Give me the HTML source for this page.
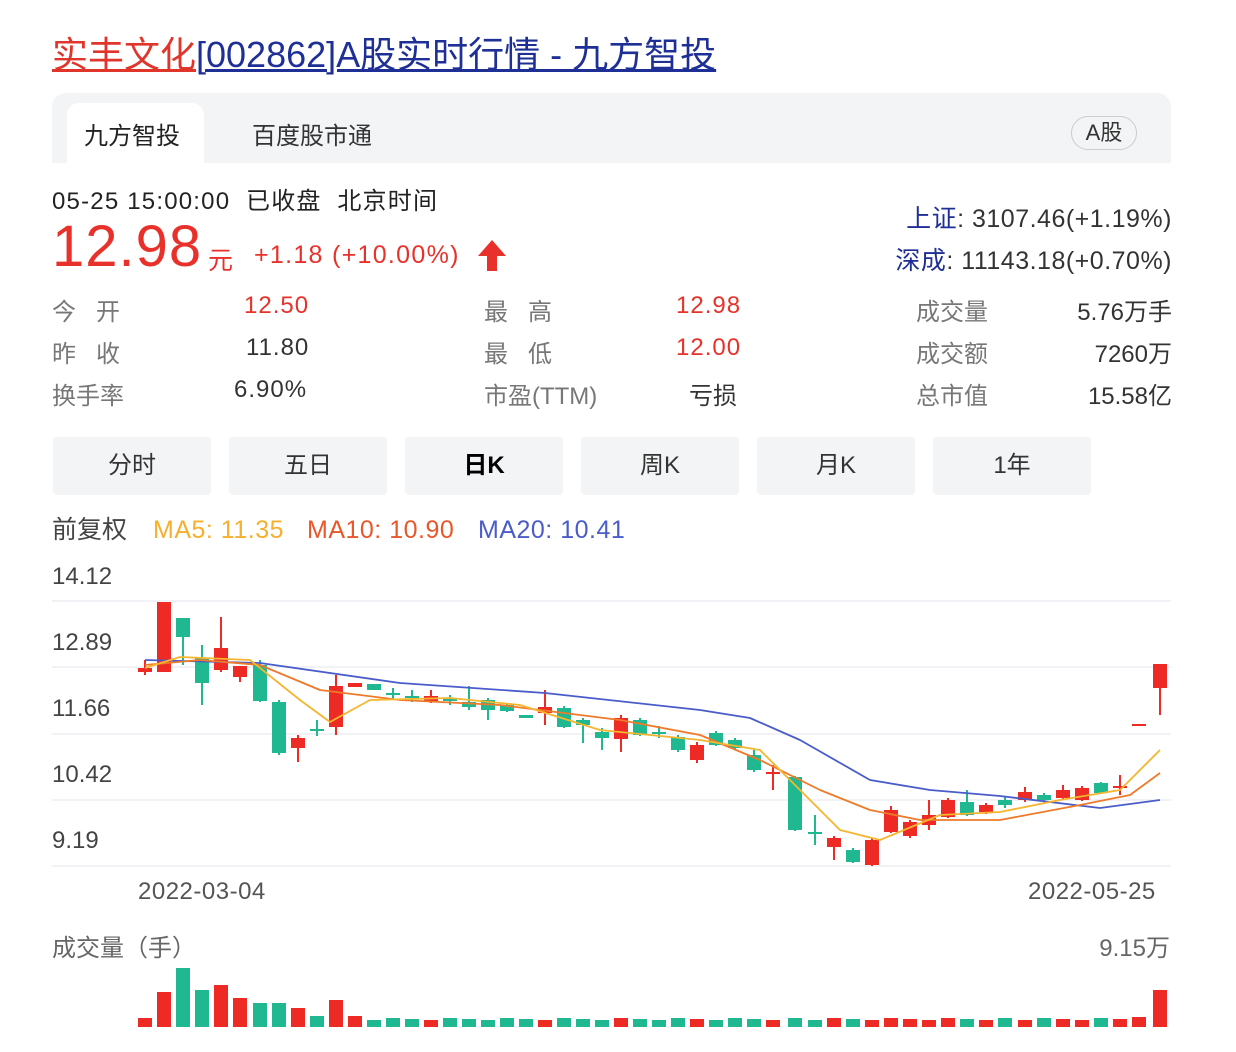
<!DOCTYPE html>
<html><head><meta charset="utf-8"><style>
body{margin:0;width:1236px;height:1052px;background:#fff;position:relative;overflow:hidden;font-family:"Liberation Sans","Noto Sans CJK SC",sans-serif;color:#333}
.a{position:absolute;white-space:nowrap}
.g{color:#777}
.btn{position:absolute;top:437px;width:158px;height:58px;background:#f3f4f6;border-radius:4px;text-align:center;line-height:58px;font-size:24px;color:#333}
.ma{line-height:30px;top:515px}
</style></head><body>
<div class="a" style="left:52px;top:32px;font-size:36px;line-height:46px"><span style="color:#e0352b;text-decoration:underline">实丰文化</span><span style="color:#1e2f96;text-decoration:underline">[002862]A股实时行情 - 九方智投</span></div>
<div class="a" style="left:52px;top:93px;width:1119px;height:70px;background:#f3f4f6;border-radius:14px 14px 0 0"></div>
<div class="a" style="left:67px;top:103px;width:137px;height:60px;background:#fff;border-radius:12px 12px 0 0"></div>
<div class="a" style="left:84px;top:116px;font-size:24px;color:#222">九方智投</div>
<div class="a" style="left:252px;top:116px;font-size:24px;color:#333">百度股市通</div>
<div class="a" style="left:1071px;top:116px;width:64px;height:32px;border:1px solid #ccc;border-radius:17px;text-align:center;line-height:32px;font-size:22px;color:#333">A股</div>
<div class="a" style="left:52px;top:181px;font-size:24px;color:#222;letter-spacing:1.2px">05-25 15:00:00&nbsp; 已收盘&nbsp; 北京时间</div>
<div class="a" style="left:52px;top:212px;font-size:58px;color:#e8312a;line-height:70px;letter-spacing:1px">12.98</div>
<div class="a" style="left:208px;top:241px;font-size:25px;color:#e8312a">元</div>
<div class="a" style="left:254px;top:241px;font-size:25px;color:#e8312a;letter-spacing:1.3px">+1.18 (+10.00%)</div>
<svg class="a" style="left:476px;top:238px" width="32" height="36"><path d="M16 2 L30 18 L21 18 L21 33 L11 33 L11 18 L2 18 Z" fill="#e8312a"/></svg>
<div class="a" style="right:64px;top:199px;font-size:25px;color:#333;letter-spacing:0.5px"><span style="color:#1e2f96">上证</span>: 3107.46(+1.19%)</div>
<div class="a" style="right:64px;top:241px;font-size:25px;color:#333;letter-spacing:0.5px"><span style="color:#1e2f96">深成</span>: 11143.18(+0.70%)</div>
<div style="font-size:24px">
<div class="a g" style="left:52px;top:292px">今&nbsp;&nbsp;&nbsp;开</div><div class="a" style="left:244px;top:292px;color:#e8312a;letter-spacing:1px">12.50</div>
<div class="a g" style="left:52px;top:334px">昨&nbsp;&nbsp;&nbsp;收</div><div class="a" style="left:246px;top:334px;letter-spacing:1px">11.80</div>
<div class="a g" style="left:52px;top:376px">换手率</div><div class="a" style="left:234px;top:376px;letter-spacing:1px">6.90%</div>
<div class="a g" style="left:484px;top:292px">最&nbsp;&nbsp;&nbsp;高</div><div class="a" style="left:676px;top:292px;color:#e8312a;letter-spacing:1px">12.98</div>
<div class="a g" style="left:484px;top:334px">最&nbsp;&nbsp;&nbsp;低</div><div class="a" style="left:676px;top:334px;color:#e8312a;letter-spacing:1px">12.00</div>
<div class="a g" style="left:484px;top:376px">市盈(TTM)</div><div class="a" style="left:689px;top:376px">亏损</div>
<div class="a g" style="left:916px;top:292px">成交量</div><div class="a" style="right:64px;top:292px">5.76万手</div>
<div class="a g" style="left:916px;top:334px">成交额</div><div class="a" style="right:64px;top:334px">7260万</div>
<div class="a g" style="left:916px;top:376px">总市值</div><div class="a" style="right:64px;top:376px">15.58亿</div>
</div>
<div class="btn" style="left:53px">分时</div><div class="btn" style="left:229px">五日</div><div class="btn" style="left:405px;color:#000;font-weight:bold">日K</div><div class="btn" style="left:581px">周K</div><div class="btn" style="left:757px">月K</div><div class="btn" style="left:933px">1年</div>
<div style="font-size:25px">
<div class="a ma" style="left:52px;color:#444">前复权</div>
<div class="a ma" style="left:153px;color:#f5b02e;letter-spacing:0.5px">MA5: 11.35</div>
<div class="a ma" style="left:307px;color:#e8582a;letter-spacing:0.5px">MA10: 10.90</div>
<div class="a ma" style="left:478px;color:#4a5cc9;letter-spacing:0.5px">MA20: 10.41</div>
</div>
<div style="font-size:24px;color:#444">
<div class="a" style="left:52px;top:563px">14.12</div><div class="a" style="left:52px;top:629px">12.89</div><div class="a" style="left:52px;top:695px">11.66</div><div class="a" style="left:52px;top:761px">10.42</div><div class="a" style="left:52px;top:827px">9.19</div>
<div class="a" style="left:138px;top:878px;color:#555;letter-spacing:0.5px">2022-03-04</div><div class="a" style="left:1028px;top:878px;color:#555;letter-spacing:0.5px">2022-05-25</div>
<div class="a" style="left:52px;top:928px;color:#666">成交量（手）</div><div class="a" style="right:66px;top:928px;color:#666">9.15万</div>
</div>
<svg id="c" class="a" style="left:0;top:0" width="1236" height="1052"></svg>
<script>
var s=document.getElementById('c'),h='';
[601,667,734,800,866].forEach(function(y){h+='<line x1="52" x2="1171" y1="'+y+'" y2="'+y+'" stroke="#eceef2" stroke-width="1.5"/>'});
var R='#ee2a24',G='#1fb890';
var c=[[145,1,668,672,660,675],[164,1,602,672,602,672],[183,0,618,637,618,665],[202,0,658,683,645,705],[221,1,648,670,617,672],[240,1,666,677,666,682],[260,0,665,701,660,702],[279,0,702,753,700,755],[298,1,738,748,735,762],[317,0,729,731,720,736],[336,1,686,727,675,735],[355,1,683,687,683,687],[374,0,684,690,684,690],[393,0,693,695,688,700],[412,0,696,698,690,702],[431,1,696,701,690,703],[450,0,699,701,695,705],[469,0,702,707,686,710],[488,0,700,710,698,720],[507,0,705,711,703,712],[526,0,715,718,715,718],[545,1,707,713,690,725],[564,0,708,727,706,728],[583,0,720,725,718,743],[602,0,732,738,728,750],[621,1,718,739,715,752],[640,0,720,735,718,736],[659,0,732,734,726,738],[678,0,737,750,735,752],[697,1,745,760,742,763],[716,0,733,745,731,746],[735,0,740,748,738,750],[754,0,755,770,750,772],[773,1,772,774,765,790],[795,0,777,830,776,831],[815,0,832,834,815,845],[834,1,838,847,836,860],[853,0,850,862,848,863],[872,1,840,865,838,866],[891,1,810,832,806,833],[910,1,822,836,820,838],[929,1,815,825,800,830],[948,1,800,817,798,818],[967,0,802,815,790,816],[986,1,805,812,803,814],[1005,0,800,805,796,808],[1025,1,792,800,787,802],[1044,0,795,800,793,802],[1063,1,790,798,785,800],[1082,1,788,800,786,801],[1101,0,783,793,782,794],[1120,1,786,788,775,795],[1139,1,724,726,724,726],[1160,1,664,688,664,715]];
var v={145:1018,164:992,183:968,202:990,221:985,240:998,260:1003,279:1003,298:1008,317:1016,336:1000,355:1016,1139:1017,1160:990};
c.forEach(function(k){var col=k[1]?R:G;h+='<line x1="'+k[0]+'" x2="'+k[0]+'" y1="'+k[4]+'" y2="'+k[5]+'" stroke="'+col+'" stroke-width="2"/>';h+='<rect x="'+(k[0]-7)+'" y="'+k[2]+'" width="14" height="'+Math.max(2,k[3]-k[2])+'" fill="'+col+'"/>';var vy=v[k[0]]||(1018+(k[0]%3));h+='<rect x="'+(k[0]-7)+'" y="'+vy+'" width="14" height="'+(1027-vy)+'" fill="'+col+'"/>';});
function pl(p,col){h+='<polyline fill="none" stroke="'+col+'" stroke-width="1.8" stroke-linejoin="round" points="'+p+'"/>'}
pl('145,660 260,663 400,683 545,693 700,710 750,718 800,740 870,780 930,790 1000,796 1100,808 1160,800','#4a5cc9');
pl('145,665 200,660 260,665 320,690 400,700 500,705 620,720 700,735 760,760 820,790 870,810 920,820 1000,820 1080,805 1130,795 1160,773','#ee7a2a');
pl('145,668 180,657 250,660 300,700 330,722 370,700 450,698 520,705 600,730 700,740 760,750 800,790 840,830 880,840 940,815 1000,812 1060,800 1120,790 1160,750','#f5b52e');
s.innerHTML=h;
</script>
</body></html>
